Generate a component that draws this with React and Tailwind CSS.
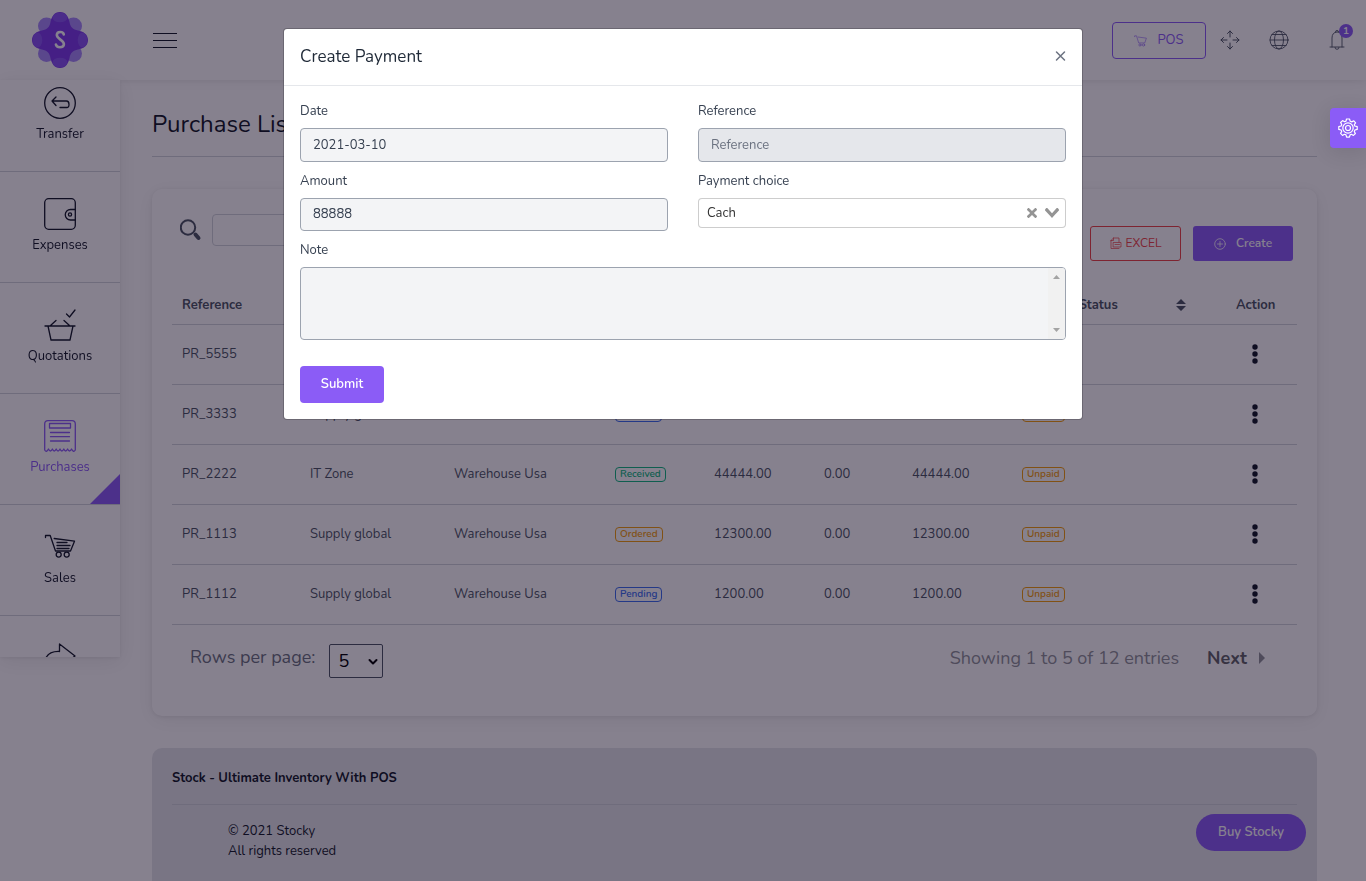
import React from "react";

const purchases = [
  { ref: "PR_5555", supplier: "Supply global", status: "Received", total: "55555.00", paid: "0.00", due: "55555.00" },
  { ref: "PR_3333", supplier: "Supply global", status: "Pending", total: "33333.00", paid: "0.00", due: "33333.00" },
  { ref: "PR_2222", supplier: "IT Zone", status: "Received", total: "44444.00", paid: "0.00", due: "44444.00" },
  { ref: "PR_1113", supplier: "Supply global", status: "Ordered", total: "12300.00", paid: "0.00", due: "12300.00" },
  { ref: "PR_1112", supplier: "Supply global", status: "Pending", total: "1200.00", paid: "0.00", due: "1200.00" },
];

const badgeTone = {
  Received: "border-[#10b981] text-[#10b981]",
  Ordered: "border-[#f59e0b] text-[#f59e0b]",
  Pending: "border-[#3b6ef0] text-[#3b6ef0]",
  Unpaid: "border-[#f59e0b] text-[#f59e0b]",
};

const columns = [
  { label: "Reference", width: "w-32" },
  { label: "Supplier", width: "w-36" },
  { label: "Warehouse", width: "w-[161px]" },
  { label: "Status", width: "w-[99px]" },
  { label: "Total", width: "w-[110px]" },
  { label: "Paid", width: "w-[88px]" },
  { label: "Due", width: "w-[110px]" },
  { label: "Payment Status", width: "w-auto" },
];

function Svg({ className, children, viewBox = "0 0 32 32", strokeWidth = 1.3 }) {
  return (
    <svg
      className={className}
      viewBox={viewBox}
      fill="none"
      stroke="currentColor"
      strokeWidth={strokeWidth}
      strokeLinecap="round"
      strokeLinejoin="round"
      aria-hidden="true"
    >
      {children}
    </svg>
  );
}

function Logo() {
  return (
    <svg className="size-14" viewBox="0 0 56 56" role="img" aria-label="Stocky">
      <g fill="#a78bfa">
        <circle cx="14.500" cy="14" r="8.500" />
        <circle cx="41.500" cy="14" r="8.500" />
        <circle cx="14.500" cy="41.500" r="8.500" />
        <circle cx="41.500" cy="41.500" r="8.500" />
      </g>
      <path
        fill="#7c3aed"
        d="M28 0C34 0 36.500 5 37.500 10C38.300 15 41 17.700 46 18.500C51 19.500 56 22 56 28C56 34 51 36.500 46 37.500C41 38.300 38.300 41 37.500 46C36.500 51 34 56 28 56C22 56 19.500 51 18.500 46C17.700 41 15 38.300 10 37.500C5 36.500 0 34 0 28C0 22 5 19.500 10 18.500C15 17.700 17.700 15 18.500 10C19.500 5 22 0 28 0z"
      />
      <g fill="#8b5cf6" opacity=".8">
        <ellipse cx="28" cy="5.500" rx="7.500" ry="4.800" />
        <ellipse cx="28" cy="50.500" rx="7.500" ry="4.800" />
        <ellipse cx="5.500" cy="28" rx="4.800" ry="7.500" />
        <ellipse cx="50.500" cy="28" rx="4.800" ry="7.500" />
      </g>
      <path
        d="M31.800 22.500C31.300 19.300 25 19 24.800 23C24.800 26.800 32.200 28.500 31.900 32.300C31.500 36.300 24.500 36 23.900 32.600"
        fill="none"
        stroke="#fff"
        strokeWidth="2.600"
        strokeLinecap="round"
      />
    </svg>
  );
}

function CartLines() {
  return (
    <>
      <path d="M1.500 6.500V4.500H6.200L11.500 20H26.500L30.500 10.200L10.200 7.500" />
      <path d="M13 11.500H23M13 14.500H26M13 17.500H25" />
      <circle cx="14.700" cy="23.600" r="2.500" />
      <circle cx="22.700" cy="23.600" r="2.500" />
    </>
  );
}

const navItems = [
  {
    label: "Transfer",
    icon: (
      <>
        <circle cx="16" cy="16" r="15.300" />
        <path d="M12 10L8 14L12 18.500M8 14H22.500Q25 14 25 17.400T22.500 20.500H16" />
      </>
    ),
  },
  {
    label: "Expenses",
    icon: (
      <>
        <rect x=".7" y=".7" width="30.600" height="30.600" rx="4" />
        <path d="M31 11.500H26.500A5 5 0 0 0 26.500 22H31" />
        <circle cx="26" cy="16.500" r="1.600" />
      </>
    ),
  },
  {
    label: "Quotations",
    icon: (
      <path d="M1 17H31M4 17L7 31H26L29 17M6.500 16.500L12 11.500M25.500 16.500L20 11.500M22.500 5L25.500 8L31 1" />
    ),
  },
  {
    label: "Purchases",
    active: true,
    icon: (
      <>
        <path d="M.7 30V4Q.7 .7 4 .7H28Q31.300 .7 31.300 4V30Q29.500 33 27.500 29Q25.500 33 23.600 29Q21.600 33 19.800 29Q17.800 33 16 29Q14 33 12.200 29Q10.200 33 8.400 29Q6.400 33 4.500 29Q2.500 33 .7 30z" />
        <rect x="5.500" y="3.500" width="21" height="4.500" />
        <path d="M6.500 12.500H25.500M6.500 16.700H25.500M6.500 21H25.500" />
      </>
    ),
  },
  { label: "Sales", icon: <CartLines /> },
  {
    label: "Sales Return",
    iconOnly: true,
    icon: <path d="M1 18Q4 9 15.500 9.500V2L31 14L15.500 26V18.500Q6 18 1 22z" />,
  },
];

function Sidebar() {
  return (
    <nav className="fixed left-0 top-20 h-[calc(100vh-304px)] w-[120px] overflow-hidden bg-white shadow-[0_4px_20px_1px_rgba(0,0,0,0.07),0_1px_4px_rgba(0,0,0,0.08)]">
      <ul className="-mt-[19px]">
        {navItems.map((item) => (
          <li key={item.label} className="relative border-b border-[#d1d5db]">
            <a
              href="#"
              aria-label={item.label}
              className={
                "flex h-[110px] flex-col items-center pt-[26px] gap-[5px] " +
                (item.active ? "text-[#8b5cf6]" : "text-[#111827]")
              }
            >
              <Svg className="size-8 overflow-visible">{item.icon}</Svg>
              {!item.iconOnly && <span className="leading-5">{item.label}</span>}
            </a>
            {item.active && (
              <span className="absolute bottom-0 right-0 size-[30px] bg-[#8b5cf6] [clip-path:polygon(100%_0,100%_100%,0_100%)]" />
            )}
          </li>
        ))}
      </ul>
    </nav>
  );
}

function Header() {
  return (
    <header className="flex h-20 items-center justify-between bg-white pr-[19px] shadow-[0_1px_15px_rgba(0,0,0,0.06),0_1px_6px_rgba(0,0,0,0.05)]">
      <div className="flex items-center">
        <div className="flex w-[120px] justify-center">
          <Logo />
        </div>
        <button type="button" aria-label="Toggle menu" className="ml-[33px] flex w-6 flex-col gap-1.5">
          <span className="h-px w-full bg-[#111827]" />
          <span className="h-px w-full bg-[#111827]" />
          <span className="h-px w-full bg-[#111827]" />
        </button>
      </div>
      <div className="flex items-center text-[#4b5563]">
        <button
          type="button"
          className="flex h-[37px] w-[94px] items-center justify-center gap-2.5 rounded border border-[#8b5cf6] text-[#8b5cf6]"
        >
          <Svg className="size-[13px]" strokeWidth={1.4}>
            <path d="M1.500 6.500V4.500H6.200L11.500 22H26.500L30.500 10.200L10.200 7.500" />
            <circle cx="14.700" cy="27" r="2.800" />
            <circle cx="23.500" cy="27" r="2.800" />
          </Svg>
          <span>POS</span>
        </button>
        <button type="button" aria-label="Full screen" className="ml-3.5">
          <Svg className="size-5" viewBox="0 0 20 20" strokeWidth={1}>
            <path d="M10 1V7M7.500 3.500L10 1L12.500 3.500M10 19V13M7.500 16.500L10 19L12.500 16.500M1 10H7M3.500 7.500L1 10L3.500 12.500M19 10H13M16.500 7.500L19 10L16.500 12.500" />
          </Svg>
        </button>
        <button type="button" aria-label="Language" className="ml-[29px]">
          <Svg className="size-5" viewBox="0 0 20 20" strokeWidth={0.9}>
            <circle cx="10" cy="10" r="9" />
            <ellipse cx="10" cy="10" rx="4.500" ry="9" />
            <path d="M1 10H19M3 4.500H17M3 15.500H17" />
          </Svg>
        </button>
        <button type="button" aria-label="Notifications" className="relative ml-[38px]">
          <Svg className="size-5" viewBox="0 0 20 20" strokeWidth={0.9}>
            <path d="M3 17H17M5 17V8Q5 2.500 10 2T15 8V17M8.500 2L9 .7H11L11.500 2M8 17.500Q8 19.300 10 19.300T12 17.500" />
          </Svg>
          <span className="absolute -right-1.5 -top-1.5 flex size-3.5 items-center justify-center rounded-full bg-[#8b5cf6] text-[10px] font-bold leading-none text-white">
            1
          </span>
        </button>
      </div>
    </header>
  );
}

function Badge({ children }) {
  return (
    <span
      className={
        "block w-fit rounded border px-1 text-[10px] font-semibold leading-[13px] " + badgeTone[children]
      }
    >
      {children}
    </span>
  );
}

function PurchaseTable() {
  return (
    <table className="mt-[23px] w-full table-fixed border-collapse text-left text-[#4b5563]">
      <thead>
        <tr className="h-10 border-b border-[#d1d5db]">
          {columns.map((c) => (
            <th key={c.label} className={"whitespace-nowrap px-2.5 pt-0.5 font-bold " + c.width}>
              <span className="flex items-center justify-between">
                {c.label}
                {c.label === "Payment Status" && (
                  <svg className="mr-[30px] h-3 w-2.5" viewBox="0 0 10 12" fill="currentColor" aria-hidden="true">
                    <path d="M0 5L5 0L10 5zM0 7L5 12L10 7z" />
                  </svg>
                )}
              </span>
            </th>
          ))}
          <th className="w-[71px] px-2.5 pt-0.5 font-bold">Action</th>
        </tr>
      </thead>
      <tbody>
        {purchases.map((p) => (
          <tr key={p.ref} className="h-[60px] border-b border-[#d1d5db]">
            <td className="whitespace-nowrap px-2.5">{p.ref}</td>
            <td className="whitespace-nowrap px-2.5">{p.supplier}</td>
            <td className="whitespace-nowrap px-2.5">Warehouse Usa</td>
            <td className="px-2.5">
              <Badge>{p.status}</Badge>
            </td>
            <td className="px-2.5">{p.total}</td>
            <td className="px-2.5">{p.paid}</td>
            <td className="px-2.5">{p.due}</td>
            <td className="px-2.5">
              <Badge>Unpaid</Badge>
            </td>
            <td className="px-2.5">
              <button type="button" aria-label={"Actions for " + p.ref} className="ml-4 block text-[#111827]">
                <svg className="h-5 w-1.5" viewBox="0 0 6 20" fill="currentColor" aria-hidden="true">
                  <circle cx="3" cy="3" r="2.700" />
                  <circle cx="3" cy="10" r="2.700" />
                  <circle cx="3" cy="17" r="2.700" />
                </svg>
              </button>
            </td>
          </tr>
        ))}
      </tbody>
    </table>
  );
}

function PurchaseCard() {
  return (
    <section className="mt-8 rounded-[10px] bg-white px-5 pb-[38px] pt-[25px] shadow-[0_4px_20px_1px_rgba(0,0,0,0.06),0_1px_4px_rgba(0,0,0,0.08)]">
      <div className="flex items-start justify-between px-1">
        <label className="flex items-center gap-2.5">
          <svg className="ml-1 size-[22px] text-[#4b5563]" viewBox="0 0 22 22" fill="none" stroke="currentColor" aria-label="Search">
            <circle cx="8" cy="8.500" r="7.200" strokeWidth="2" />
            <path d="M15.500 15.500L18.500 19" strokeWidth="4" strokeLinecap="round" />
          </svg>
          <input type="search" className="h-8 w-80 rounded border border-[#d1d5db] px-3" />
        </label>
        <div className="mt-3 flex gap-3">
          <button
            type="button"
            className="flex h-[35px] w-[91px] items-center justify-center gap-1 rounded-[3px] border border-[#ef4444] pb-0.5 text-xs text-[#ef4444]"
          >
            <Svg className="size-3" viewBox="0 0 12 12" strokeWidth={0.7}>
              <path d="M1 3.500L3.500 1H9V5M1 3.500V11.500H9M3.500 1V3.500H1M3.500 5.500H11V10H3.500zM5 7.500H9.500" />
            </Svg>
            EXCEL
          </button>
          <button
            type="button"
            className="flex h-[35px] w-[100px] items-center justify-center gap-2.5 rounded-[3px] bg-[#8b5cf6] text-xs font-semibold text-white"
          >
            <Svg className="size-3" viewBox="0 0 12 12" strokeWidth={0.8}>
              <circle cx="6" cy="6" r="5.300" />
              <path d="M6 3.500V8.500M3.500 6H8.500" />
            </Svg>
            <span className="pb-0.5">Create</span>
          </button>
        </div>
      </div>
      <PurchaseTable />
      <div className="flex items-center justify-between pl-[18px] pr-8 pt-[19px] text-lg">
        <label className="flex items-center gap-3.5 text-[#6b7280]">
          <span className="pb-2 leading-6">Rows per page:</span>
          <span className="relative">
            <select className="h-[34px] w-[54px] appearance-none rounded-[2px] border border-[#4b5563] bg-transparent pl-2 text-black">
              <option>5</option>
              <option>10</option>
            </select>
            <Svg className="pointer-events-none absolute right-1 top-3.5 h-2 w-3 text-black" viewBox="0 0 12 8" strokeWidth={2}>
              <path d="M2.500 2L6 5.500L9.500 2" />
            </Svg>
          </span>
        </label>
        <div className="flex items-center pb-1.5">
          <span className="text-[#909399]">Showing 1 to 5 of 12 entries</span>
          <button type="button" className="ml-7 flex items-center gap-3 font-bold text-[#606266]">
            Next
            <svg className="h-3 w-1.5 text-[#909399]" viewBox="0 0 6 12" fill="currentColor" aria-hidden="true">
              <path d="M0 0L6 6L0 12z" />
            </svg>
          </button>
        </div>
      </div>
    </section>
  );
}

function Footer() {
  return (
    <footer className="mt-8 rounded-t-[10px] bg-[#e5e7eb] px-5 pb-10 pt-5 text-[#111827]">
      <p className="font-bold leading-5">Stock - Ultimate Inventory With POS</p>
      <hr className="mt-4 border-[#d1d5db]" />
      <div className="-mr-[9px] flex items-start justify-between pl-14 pt-[9px]">
        <p className="pt-[7px] leading-5">
          © 2021 Stocky
          <br />
          All rights reserved
        </p>
        <a
          href="#"
          className="flex h-[37px] w-[110px] items-center justify-center rounded-full bg-[#8b5cf6] font-semibold text-white"
        >
          Buy Stocky
        </a>
      </div>
    </footer>
  );
}

const fieldBox = "block w-full rounded border border-[#9ca3af] bg-[#f3f4f6] px-3 text-[#374151]";
const fieldLabel = "mb-2 block leading-[18px] text-[#374151]";

function PaymentDialog() {
  return (
    <div
      role="dialog"
      aria-modal="true"
      aria-labelledby="payment-title"
      className="mt-7 w-full max-w-[800px] rounded border border-black/20 bg-white bg-clip-padding"
    >
      <div className="flex h-[57px] items-center justify-between border-b border-[#e5e7eb] px-4">
        <h2 id="payment-title" className="text-[17px] text-[#1f2937]">
          Create Payment
        </h2>
        <button type="button" aria-label="Close" className="pb-0.5 text-[#6b7280]">
          <Svg className="size-3" viewBox="0 0 12 12" strokeWidth={1.5}>
            <path d="M2.500 2L10.500 10M10.500 2L2.500 10" />
          </Svg>
        </button>
      </div>
      <form className="p-4" onSubmit={(e) => e.preventDefault()}>
        <div className="grid grid-cols-2 gap-x-[30px] gap-y-2.5">
          <div>
            <label className={fieldLabel} htmlFor="pay-date">Date</label>
            <input id="pay-date" type="text" defaultValue="2021-03-10" className={fieldBox + " h-[34px]"} />
          </div>
          <div>
            <label className={fieldLabel} htmlFor="pay-ref">Reference</label>
            <input
              id="pay-ref"
              type="text"
              disabled
              placeholder="Reference"
              className="block h-[34px] w-full rounded border border-[#9ca3af] bg-[#e5e7eb] px-3 placeholder:text-[#6b7280]"
            />
          </div>
          <div>
            <label className={fieldLabel} htmlFor="pay-amount">Amount</label>
            <input id="pay-amount" type="text" defaultValue="88888" className={fieldBox + " h-[33px] pb-0.5"} />
          </div>
          <div>
            <label className={fieldLabel} htmlFor="pay-choice">Payment choice</label>
            <div className="relative">
              <select
                id="pay-choice"
                className="block h-[30px] w-full appearance-none rounded border border-[#3c3c3c]/26 bg-white px-2 text-[#333]"
              >
                <option>Cach</option>
                <option>Cheque</option>
              </select>
              <div className="pointer-events-none absolute inset-y-0 right-[7px] flex items-center gap-2 text-[#949494]">
                <svg className="size-2.5" viewBox="0 0 10 10" fill="currentColor" aria-hidden="true">
                  <path d="M6.895 5l2.843-2.843c.349-.349.349-.914 0-1.264L9.107.262c-.349-.349-.915-.349-1.264 0L5 3.105 2.157.262c-.349-.349-.914-.349-1.264 0L.262.893c-.349.349-.349.915 0 1.264L3.105 5 .262 7.843c-.349.349-.349.914 0 1.264l.631.631c.349.349.915.349 1.264 0L5 6.895l2.843 2.843c.349.349.915.349 1.264 0l.631-.631c.349-.349.349-.915 0-1.264L6.895 5z" />
                </svg>
                <svg className="h-2.5 w-3.5" viewBox="0 0 14 10" fill="currentColor" aria-hidden="true">
                  <path d="M9.211 7.599l4.484-4.867c.407-.442.407-1.158 0-1.600l-.737-.801c-.407-.442-1.067-.442-1.475 0L7 5.199 2.517.331c-.407-.442-1.067-.442-1.475 0l-.737.801c-.407.442-.407 1.158 0 1.600l4.484 4.867L7 10l2.211-2.401z" />
                </svg>
              </div>
            </div>
          </div>
          <div className="col-span-2">
            <label className={fieldLabel} htmlFor="pay-note">Note</label>
            <div className="relative">
              <textarea id="pay-note" className={fieldBox + " h-[73px] resize-none overflow-hidden py-2"} />
              <div className="pointer-events-none absolute inset-y-px right-px flex w-[17px] flex-col items-center justify-between rounded-r-[3px] bg-[#f1f1f1] py-[7px] text-[#a3a3a3]">
                <svg className="h-1 w-[7px]" viewBox="0 0 7 4" fill="currentColor" aria-hidden="true">
                  <path d="M0 4L3.500 0L7 4z" />
                </svg>
                <svg className="h-1 w-[7px]" viewBox="0 0 7 4" fill="currentColor" aria-hidden="true">
                  <path d="M0 0L3.500 4L7 0z" />
                </svg>
              </div>
            </div>
          </div>
        </div>
        <button
          type="submit"
          className="mt-[26px] block h-[37px] w-[84px] rounded bg-[#8b5cf6] pb-0.5 font-semibold text-white"
        >
          Submit
        </button>
      </form>
    </div>
  );
}

export default function App() {
  return (
    <div className="h-screen overflow-hidden bg-white font-['Nunito','Open_Sans',sans-serif] text-[13px] leading-5">
      <Header />
      <Sidebar />
      <main className="ml-[120px] pl-8 pr-[49px] pt-7">
        <h1 className="border-b border-[#d1d5db] pb-4 text-2xl leading-8 text-[#111827]">Purchase List</h1>
        <PurchaseCard />
        <Footer />
      </main>
      <div className="fixed inset-0 flex items-start justify-center bg-[#0d031d]/50">
        <PaymentDialog />
      </div>
      <button
        type="button"
        aria-label="Settings"
        className="fixed right-0 top-[108px] flex h-10 w-9 items-center justify-center rounded-l bg-[#8b5cf6] text-white shadow-[0_4px_20px_1px_rgba(0,0,0,0.1)]"
      >
        <Svg className="size-5" viewBox="0 0 20 20" strokeWidth={1.2}>
          <path d="M8.500 1H11.500L12.200 3.200L13.800 3.900L15.800 2.800L17.600 4.800L16.300 6.600L16.800 8L19.200 8.600V11.400L16.900 12L16.300 13.600L17.400 15.500L15.400 17.400L13.500 16.300L12.100 16.900L11.400 19.200H8.600L8 16.900L6.400 16.300L4.500 17.400L2.600 15.400L3.700 13.500L3.100 12L.8 11.400V8.600L3.100 8L3.700 6.400L2.600 4.500L4.600 2.600L6.500 3.700L8 3.100z" />
          <circle cx="10" cy="10" r="5.200" />
          <circle cx="10" cy="10" r="2.500" />
        </Svg>
      </button>
    </div>
  );
}
